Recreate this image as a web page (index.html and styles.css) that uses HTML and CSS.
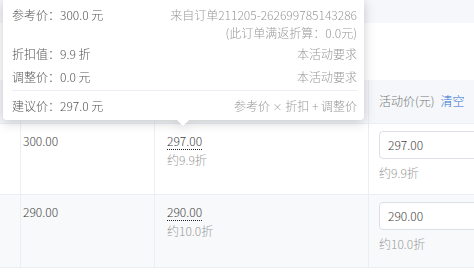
FILE: index.html
```html
<!DOCTYPE html>
<html lang="zh">
<head>
<meta charset="utf-8">
<link rel="stylesheet" href="styles.css">
</head>
<body>
<div class="page">
  <div class="topbar"></div>
  <div class="spacer"></div>
  <div class="table">
    <div class="row head">
      <div class="cell c0"></div>
      <div class="cell c1"></div>
      <div class="cell c2"></div>
      <div class="cell c3"><span class="th">活动价(元)</span><span class="link">清空</span></div>
    </div>
    <div class="row">
      <div class="cell c0"></div>
      <div class="cell c1"><div class="val">300.00</div></div>
      <div class="cell c2"><div class="val"><span class="dotted">297.00</span></div><div class="sub">约9.9折</div></div>
      <div class="cell c3"><div class="input">297.00</div><div class="sub">约9.9折</div></div>
    </div>
    <div class="row stripe">
      <div class="cell c0"></div>
      <div class="cell c1"><div class="val">290.00</div></div>
      <div class="cell c2"><div class="val"><span class="dotted">290.00</span></div><div class="sub">约10.0折</div></div>
      <div class="cell c3"><div class="input">290.00</div><div class="sub">约10.0折</div></div>
    </div>
  </div>

  <div class="tooltip">
    <div class="tip-row first">
      <div class="tl">参考价：300.0 元</div>
      <div class="tr">来自订单211205-262699785143286<br>(此订单满返折算：0.0元)</div>
    </div>
    <div class="tip-row r3">
      <div class="tl">折扣值：9.9 折</div>
      <div class="tr">本活动要求</div>
    </div>
    <div class="tip-row r4">
      <div class="tl">调整价：0.0 元</div>
      <div class="tr">本活动要求</div>
    </div>
    <div class="tip-row total">
      <div class="tl">建议价：297.0 元</div>
      <div class="tr">参考价 <span class="times">×</span> 折扣 + 调整价</div>
    </div>
  </div>
</div>
</body>
</html>
```

FILE: styles.css
```css
* { box-sizing: border-box; }
html, body { margin: 0; padding: 0; background: #fff; }
body {
  font-family: "Noto Sans CJK SC", "Noto Sans", sans-serif;
  font-size: 12px;
  font-weight: 300;
  color: #444;
  width: 474px;
  height: 280px;
  overflow: hidden;
}
.page { position: relative; width: 474px; height: 280px; overflow: hidden; }
.topbar { height: 23px; background: #f5f7fa; }
.spacer { height: 57px; }
.table { width: 474px; overflow: hidden; }
.row {
  display: grid;
  grid-template-columns: 13px 142px 214px 140px;
  border-bottom: 1px solid #ebeef5;
  height: 71px;
}
.row.head { height: 44px; background: #f5f7fa; }
.row.stripe { background: #f8f9fb; height: 73px; }
.cell { border-right: 1px solid #ebeef5; padding: 8px 10px 0 10px; line-height: 18px; }
.c2 { padding-left: 12px; }
.head .cell { padding-top: 12px; }
.th { color: #777; }
.link { color: #2f6fd2; margin-left: 6px; }
.val { color: #444; }
.dotted { display: inline-block; line-height: 16px; border-bottom: 1px dotted #222; }
.sub { color: #999; margin-top: 0; }
.c2 .sub { margin-top: 1px; }
.c3 { padding-top: 7px; }
.input {
  height: 28px;
  width: 130px;
  border: 1px solid #dcdfe6;
  border-radius: 4px;
  background: #fff;
  padding: 0 8px;
  line-height: 26px;
  color: #444;
}
.c3 .sub { margin-top: 5px; }

.tooltip {
  position: absolute;
  left: 3px;
  top: 0;
  width: 361px;
  background: #fff;
  padding: 6px 7px 4px 9px;
  border-radius: 0 0 4px 4px;
  filter: drop-shadow(0 2px 6px rgba(0,0,0,0.2));
  line-height: 18px;
}
.tooltip::after {
  content: "";
  position: absolute;
  left: 174px;
  bottom: -6px;
  border-left: 6px solid transparent;
  border-right: 6px solid transparent;
  border-top: 6px solid #fff;
}
.tip-row { display: flex; justify-content: space-between; }
.tl { color: #555; white-space: nowrap; }
.tr { color: #999; text-align: right; white-space: nowrap; }
.times { font-size: 10px; }
.r3 { margin-top: 3px; }
.r4 { margin-top: 5px; padding-bottom: 4px; border-bottom: 1px solid #ebeef5; }
.total { padding-top: 6px; }
```
